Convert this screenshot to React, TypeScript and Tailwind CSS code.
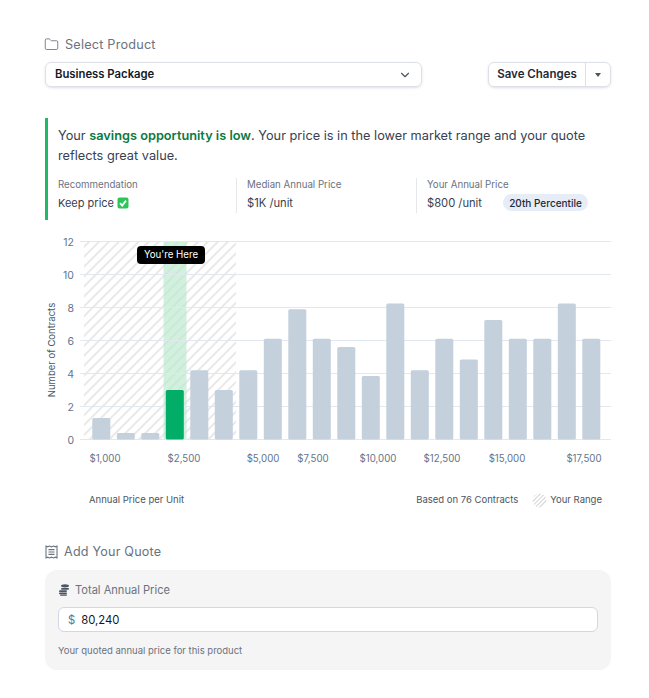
import React from "react";
import { ChevronDown, Folder } from "lucide-react";

const BARS = [1.3, 0.4, 0.4, 3, 4.2, 3, 4.2, 6.1, 7.9, 6.1, 5.6, 3.85, 8.25, 4.2, 6.1, 4.85, 7.25, 6.1, 6.1, 8.25, 6.1];
const X_LABELS: [string, number][] = [
  ["$1,000", 60],
  ["$2,500", 139],
  ["$5,000", 218],
  ["$7,500", 268],
  ["$10,000", 333],
  ["$12,500", 397],
  ["$15,000", 462],
  ["$17,500", 539],
];

const UNIT = 16.5;
const BASE = 204.5;

function Chart() {
  return (
    <svg width="566" height="235" className="block" style={{ fontFamily: "Inter, sans-serif" }}>
      <defs>
        <pattern id="hatch" width="7" height="7" patternUnits="userSpaceOnUse" patternTransform="rotate(45)">
          <line x1="1" y1="0" x2="1" y2="7" stroke="#d6d6d6" strokeWidth="1.1" />
        </pattern>
      </defs>
      <rect x="39" y="6" width="152" height="198" fill="url(#hatch)" />
      <rect x="118.5" y="6" width="23" height="198" fill="#b9e8cb" fillOpacity="0.65" />
      {[0, 2, 4, 6, 8, 10, 12].map((n) => (
        <g key={n}>
          <line x1="35" x2="566" y1={BASE - n * UNIT} y2={BASE - n * UNIT} stroke="#e2e8f0" strokeWidth="1" />
          <text x="29" y={BASE - n * UNIT + 4} textAnchor="end" fontSize="10.5" fill="#64748b">
            {n}
          </text>
        </g>
      ))}
      {BARS.map((v, i) => (
        <rect
          key={i}
          x={47.3 + i * 24.5}
          y={BASE - v * UNIT}
          width="18"
          height={v * UNIT}
          rx="1.5"
          fill={i === 3 ? "#02ad67" : "#c4d0dc"}
        />
      ))}
      {X_LABELS.map(([t, x]) => (
        <text key={t} x={x} y="227" textAnchor="middle" fontSize="9.7" fill="#64748b">
          {t}
        </text>
      ))}
      <text transform="translate(10 115) rotate(-90)" textAnchor="middle" fontSize="9.5" fill="#4b5563">
        Number of Contracts
      </text>
    </svg>
  );
}

function CheckBox() {
  return (
    <svg width="12" height="12" viewBox="0 0 12 12">
      <rect x="0.5" y="0.5" width="11" height="11" rx="2" fill="#2fc45a" />
      <path d="M3 6.2 5.2 8.6 9 3.6" fill="none" stroke="#fff" strokeWidth="1.8" />
    </svg>
  );
}

function CoinStack() {
  return (
    <svg width="13" height="12" viewBox="0 0 13 12" fill="#4b5563">
      <ellipse cx="7" cy="1.8" rx="4" ry="1.6" />
      <rect x="3" y="3.9" width="8" height="1.8" rx="0.9" />
      <rect x="1" y="6.2" width="8" height="1.8" rx="0.9" />
      <rect x="1" y="8.4" width="8" height="1.8" rx="0.9" />
      <rect x="2" y="10.4" width="7" height="1.4" rx="0.7" />
    </svg>
  );
}

function ReceiptIcon() {
  return (
    <svg width="13" height="14" viewBox="0 0 13 14" fill="none" stroke="#6b7280" strokeWidth="1.1">
      <path d="M1 1 2.7 1.8 4.4 1 6.5 1.8 8.6 1 10.3 1.8 12 1V13L10.3 12.2 8.6 13 6.5 12.2 4.4 13 2.7 12.2 1 13Z" />
      <path d="M3.5 4.6H9.5M3.5 7H9.5M3.5 9.4H9.5" />
    </svg>
  );
}

export default function App() {
  return (
    <div className="w-[649px] h-[698px] bg-white pl-[45px] pr-[38px] pt-[36px] text-[#374151]" style={{ fontFamily: "Inter, sans-serif" }}>
      {/* Product picker */}
      <div className="flex items-center gap-[6px] h-[16px] text-[#6b7280]">
        <Folder className="w-[15px] h-[15px] -ml-px" strokeWidth={1.4} />
        <span className="text-[12.7px] tracking-[0.2px] pt-px">Select Product</span>
      </div>
      <div className="mt-[10px] flex justify-between">
        <div className="w-[377px] h-[25px] flex items-center justify-between px-[9px] rounded-md border border-[#dde1e6] shadow-sm">
          <span className="text-[11.3px] font-semibold text-[#111827]">Business Package</span>
          <ChevronDown className="w-[14px] h-[14px] text-[#4b5563]" />
        </div>
        <div className="w-[123px] h-[25px] flex rounded-md border border-[#dde1e6] shadow-sm">
          <span className="w-[97px] flex items-center justify-center border-r border-[#dde1e6] pt-px text-[11.5px] font-semibold text-[#1f2937]">
            Save Changes
          </span>
          <span className="flex-1 flex items-center justify-center">
            <span className="border-x-[3.5px] border-x-transparent border-t-[4px] border-t-[#4b5563]" />
          </span>
        </div>
      </div>

      {/* Savings callout */}
      <div className="mt-[31px] h-[102px] border-l-[3px] border-[#22b868] pl-[10px] pt-[8px]">
        <p className="text-[12.75px] leading-[20px] text-[#374151]">
          Your <span className="font-semibold text-[#0b7a43]">savings opportunity is low</span>. Your price is in the lower market range and your quote reflects great value.
        </p>
        <div className="mt-[12px] flex h-[35px]">
          <div className="w-[179px] border-r border-[#e5e7eb]">
            <div className="text-[9.7px] leading-[14px] text-[#6b7280]">Recommendation</div>
            <div className="mt-[3px] flex items-center gap-[3px] text-[11px] leading-[16px]">
              Keep price <CheckBox />
            </div>
          </div>
          <div className="w-[180px] pl-[10px] border-r border-[#e5e7eb]">
            <div className="text-[9.7px] leading-[14px] text-[#6b7280]">Median Annual Price</div>
            <div className="mt-[3px] text-[11.2px] leading-[16px]">$1K /unit</div>
          </div>
          <div className="pl-[10px]">
            <div className="text-[9.7px] leading-[14px] text-[#6b7280]">Your Annual Price</div>
            <div className="mt-[2px] flex items-center gap-[21px] text-[11.2px] leading-[16px]">
              $800 /unit
              <span className="h-[17px] w-[85px] flex items-center justify-center rounded-full bg-[#e6edf6] text-[10px] font-medium text-[#1f2937]">
                20th Percentile
              </span>
            </div>
          </div>
        </div>
      </div>

      {/* Histogram */}
      <div className="relative mt-[15px]">
        <Chart />
        <div className="absolute left-[92px] top-[11px] w-[68px] h-[18px] flex items-center justify-center rounded bg-black text-white text-[9.7px]">
          You're Here
        </div>
      </div>
      <div className="mt-[23px] flex items-center justify-between pl-[44px] pr-[9px] text-[9.5px] text-[#4b5563]">
        <span>Annual Price per Unit</span>
        <div className="flex items-center">
          <span>Based on 76 Contracts</span>
          <svg width="15" height="15" className="ml-[14px] mr-[3px]">
            <defs>
              <pattern id="swatch" width="3" height="3" patternUnits="userSpaceOnUse" patternTransform="rotate(45)">
                <line x1="0" y1="0" x2="0" y2="3" stroke="#c4c4c4" strokeWidth="1.5" />
              </pattern>
            </defs>
            <circle cx="7.5" cy="7.5" r="7" fill="url(#swatch)" />
          </svg>
          <span>Your Range</span>
        </div>
      </div>

      {/* Quote form */}
      <div className="mt-[36px] flex items-center gap-[6px] h-[16px] text-[#6b7280]">
        <ReceiptIcon />
        <span className="text-[12.6px] tracking-[0.2px]">Add Your Quote</span>
      </div>
      <div className="mt-[10px] h-[100px] rounded-xl bg-[#f5f5f5] px-[13px] pt-[13px]">
        <div className="flex items-center gap-[4px] h-[14px] text-[#6b7280]">
          <CoinStack />
          <span className="text-[11.1px]">Total Annual Price</span>
        </div>
        <div className="mt-[10px] h-[25px] flex items-center gap-[6px] rounded-md border border-[#cfd9e5] bg-white px-[9px] pt-px text-[11.3px]">
          <span className="text-[#64748b]">$</span>
          <span className="text-[#111827]">80,240</span>
        </div>
        <p className="mt-[12px] text-[9.5px] leading-[14px] text-[#6b7280]">Your quoted annual price for this product</p>
      </div>
    </div>
  );
}
